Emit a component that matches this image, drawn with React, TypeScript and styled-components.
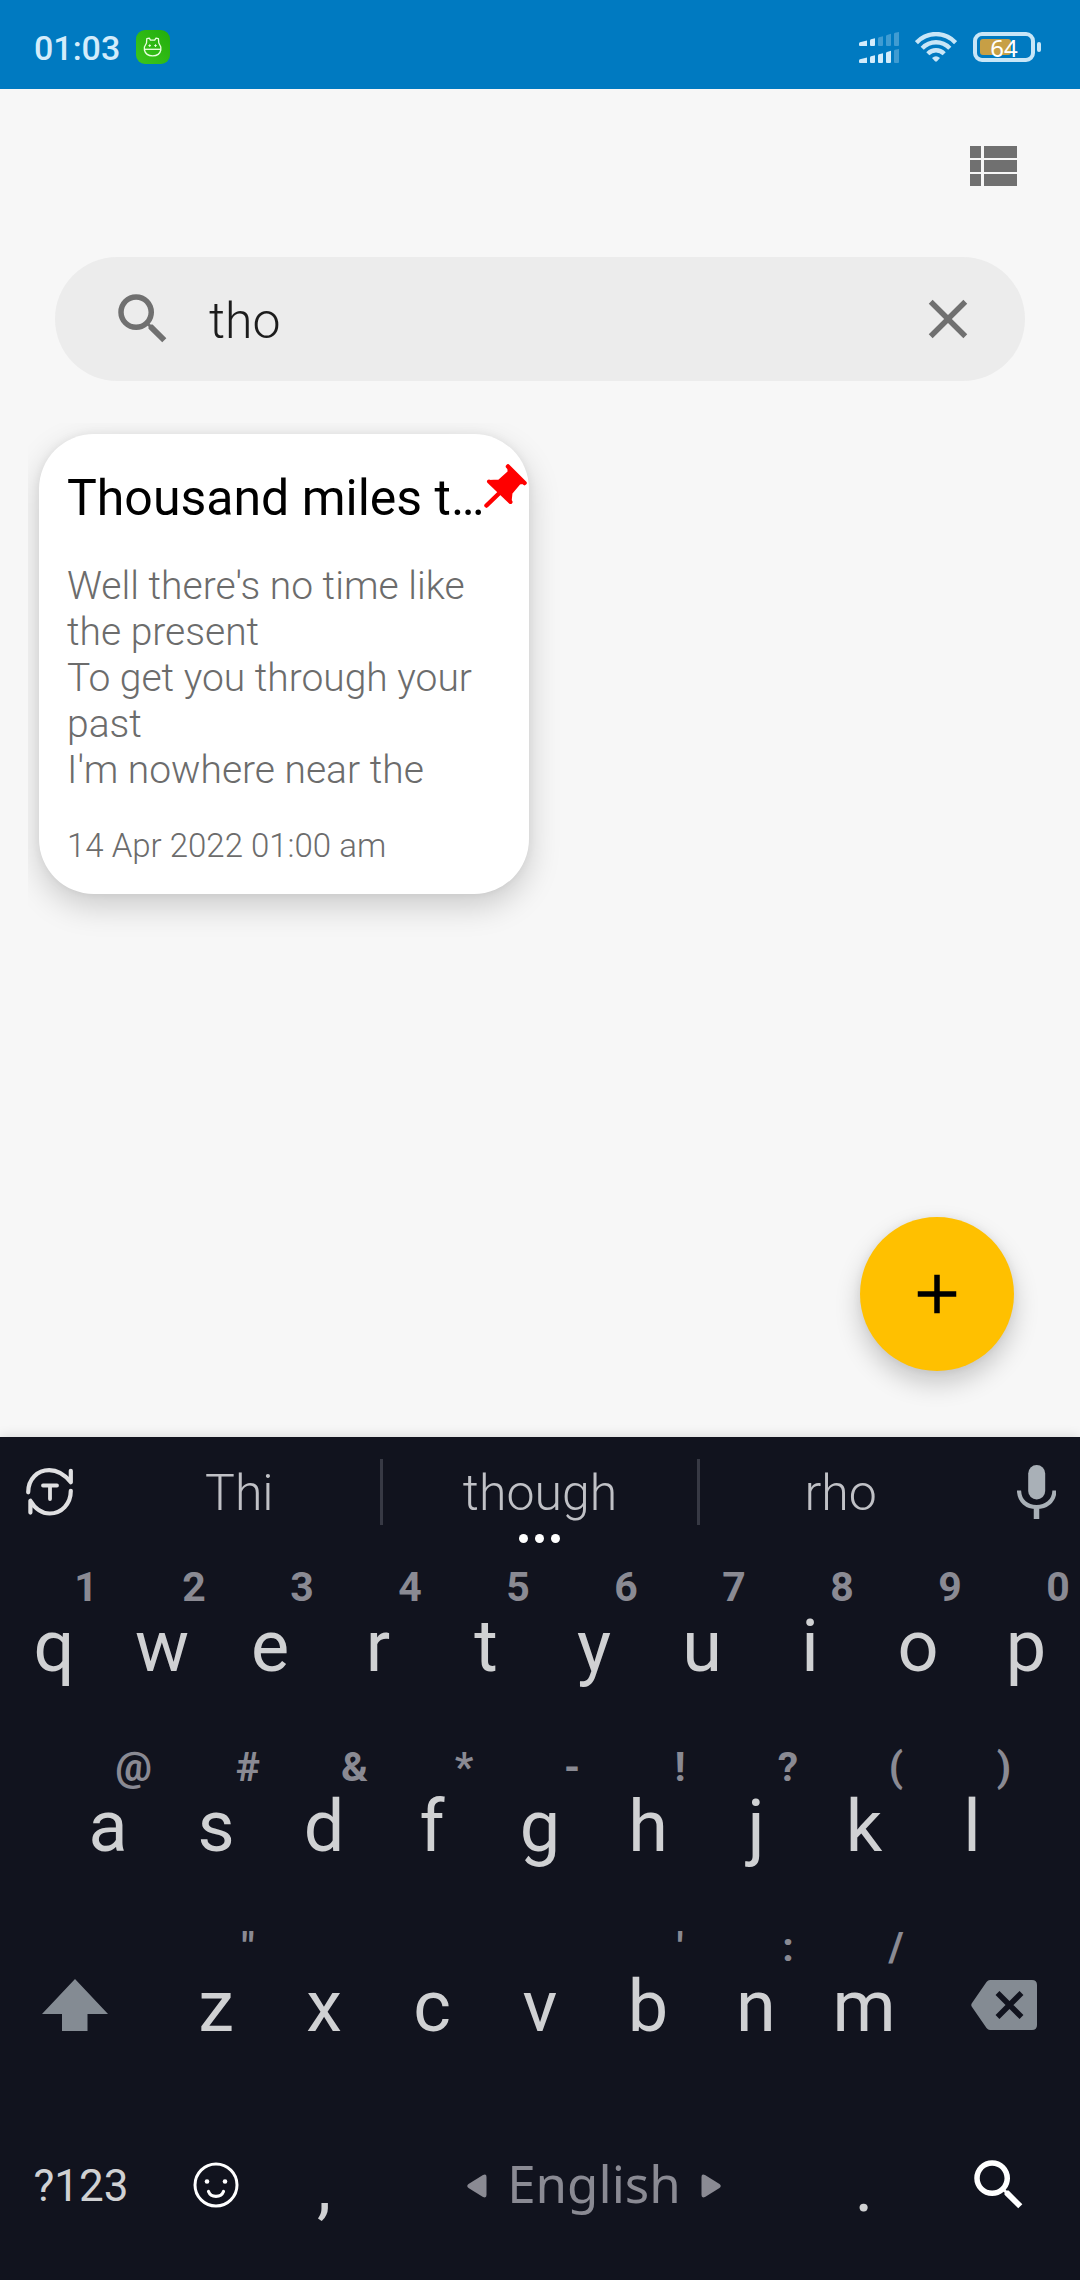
import React, { useState } from "react";
import styled, { createGlobalStyle } from "styled-components";
import { MdAdd, MdClose, MdSearch } from "react-icons/md";

const GlobalStyle = createGlobalStyle`
  *, *::before, *::after { box-sizing: border-box; }
  body { margin: 0; background: #f7f7f7; font-family: Roboto, "Noto Sans", sans-serif; }
  button, input { font: inherit; color: inherit; border: 0; padding: 0; margin: 0; background: none; }
  button { cursor: pointer; }
  svg { display: block; flex: none; }
`;

const Screen = styled.div`
  min-height: 100vh;
  display: flex;
  flex-direction: column;
`;

/* ---------- Status bar ---------- */

const StatusBar = styled.header`
  display: flex;
  align-items: center;
  gap: 16px;
  height: 89px;
  padding: 5px 39px 0 34px;
  background: #007ac1;
  color: #d3ecfb;
`;

const Clock = styled.time`
  padding-top: 2px;
  font-size: 34px;
  line-height: 40px;
  font-weight: 500;
`;

const StatusIcons = styled.div`
  display: flex;
  align-items: center;
  gap: 16px;
  margin-left: auto;
`;

const Battery = styled.div`
  display: flex;
  align-items: center;
  gap: 2px;
`;

const BatteryShell = styled.div`
  position: relative;
  width: 62px;
  height: 30px;
  padding: 3px;
  border: 4px solid #c8e6f7;
  border-radius: 9px;
`;

const BatteryCharge = styled.div`
  height: 100%;
  border-radius: 3px;
  background: #c79f45;
`;

const BatteryLabel = styled.span`
  position: absolute;
  inset: 0;
  display: grid;
  place-items: center;
  font: 24px/24px "Noto Sans", sans-serif;
  color: #fff;
`;

const BatteryCap = styled.div`
  width: 4px;
  height: 10px;
  border-radius: 2px;
  background: #c8e6f7;
`;

/* ---------- Notes page ---------- */

const Main = styled.main`
  flex: 1;
  display: flex;
  flex-direction: column;
`;

const Toolbar = styled.div`
  display: flex;
  justify-content: flex-end;
  padding: 44px 55px 58px;
`;

const IconButton = styled.button`
  flex: none;
  color: #707070;
`;

const SearchBar = styled.form`
  display: flex;
  align-items: center;
  gap: 33px;
  height: 124px;
  margin: 0 55px;
  padding: 0 44px 0 55px;
  border-radius: 62px;
  background: #ececec;
  color: #707070;
`;

const SearchInput = styled.input`
  flex: 1;
  min-width: 0;
  height: 64px;
  padding-top: 4px;
  font-size: 50px;
  font-weight: 300;
  color: #1c1c1c;
  outline: none;
`;

const NoteGrid = styled.section`
  display: grid;
  grid-template-columns: 1fr 1fr;
  margin: 42px 28px 0;
  padding-bottom: 40px;
  overflow: hidden;
`;

const NoteCard = styled.article`
  position: relative;
  margin: 11px;
  padding: 35px 28px 28px;
  border-radius: 55px;
  background: #fff;
  box-shadow: 0 12px 32px rgba(0, 0, 0, 0.18), 0 0 10px rgba(0, 0, 0, 0.06);
`;

const NoteTitle = styled.h2`
  margin: 0;
  font-size: 50px;
  line-height: 58px;
  font-weight: 400;
  color: #000;
  white-space: nowrap;
`;

const NoteBody = styled.p`
  margin: 36px 0 33px;
  font-size: 39px;
  line-height: 46px;
  font-weight: 300;
  color: #6c6c6c;
  white-space: pre-line;
`;

const NoteDate = styled.time`
  display: block;
  font-size: 33px;
  line-height: 40px;
  font-weight: 300;
  color: #6c6c6c;
`;

const PinBadge = styled.span`
  position: absolute;
  top: 30px;
  right: 2px;
`;

const AddButton = styled.button`
  display: grid;
  place-items: center;
  align-self: flex-end;
  width: 154px;
  height: 154px;
  margin: auto 66px 66px;
  border-radius: 50%;
  background: #ffc000;
  color: #000;
  box-shadow: 0 12px 26px rgba(0, 0, 0, 0.2), 0 0 8px rgba(0, 0, 0, 0.06);
`;

/* ---------- Keyboard ---------- */

const Keyboard = styled.section`
  background: #11131e;
  color: #d0d1d3;
  box-shadow: 0 0 12px rgba(0, 0, 0, 0.14);
`;

const SuggestionStrip = styled.div`
  display: grid;
  grid-template-columns: 99px 7fr 8fr 7fr 99px;
  align-items: center;
  height: 123px;
  padding-bottom: 13px;
`;

const StripButton = styled.button<{ $shift?: number }>`
  display: grid;
  place-items: center;
  padding-left: ${(p) => p.$shift ?? 0}px;
`;

const Suggestion = styled.button<{ $divided?: boolean }>`
  position: relative;
  height: 66px;
  padding-top: 2px;
  border: solid #373944;
  border-width: ${(p) => (p.$divided ? "0 3px" : "0")};
  font-size: 50px;
  line-height: 64px;
  font-weight: 300;
  color: #c0c1c6;
`;

const MoreDots = styled.span`
  position: absolute;
  left: 0;
  right: 0;
  top: 75px;
  display: flex;
  justify-content: center;
  gap: 7px;
`;

const Dot = styled.i`
  width: 9px;
  height: 9px;
  border-radius: 50%;
  background: #fff;
`;

const KeyRow = styled.div<{ $columns: string; $inset?: boolean }>`
  display: grid;
  grid-template-columns: ${(p) => p.$columns};
  height: 180px;
  padding: ${(p) => (p.$inset ? "0 5%" : "0")};
`;

const LetterKey = styled.button`
  display: flex;
  flex-direction: column;
  align-items: center;
`;

const Hint = styled.span`
  align-self: flex-end;
  min-width: 24px;
  height: 54px;
  margin-right: 10px;
  font-size: 41px;
  line-height: 54px;
  font-weight: 700;
  text-align: center;
  color: #8a8a93;
`;

const Letter = styled.span`
  font-size: 72px;
  line-height: 66px;
`;

const ActionKey = styled.button<{ $size?: number; $padding?: string }>`
  display: flex;
  align-items: center;
  justify-content: center;
  gap: 20px;
  padding: ${(p) => p.$padding ?? "0 0 8px"};
  font-size: ${(p) => p.$size ?? 44}px;
`;

const Language = styled.span`
  padding-bottom: 6px;
  font-family: "Noto Sans", sans-serif;
  font-size: 51px;
  line-height: 64px;
  font-weight: 400;
`;

const SpaceKey = styled(ActionKey)`
  color: #8a8a93;
`;

/* ---------- Drawings ---------- */

const ListIcon = () => (
  <svg width="66" height="66" viewBox="0 0 66 66" fill="currentColor" aria-hidden="true">
    <path d="M11 13H22V25H11ZM25 13H58V25H25ZM11 27H22V39H11ZM25 27H58V39H25ZM11 41H22V53H11ZM25 41H58V53H25Z" />
  </svg>
);

const AppBadge = () => (
  <svg width="34" height="34" viewBox="0 0 34 34" aria-hidden="true">
    <defs>
      <linearGradient id="badge" x1="0" y1="1" x2="1" y2="0">
        <stop offset="0" stopColor="#3cc61c" />
        <stop offset="1" stopColor="#22ad0d" />
      </linearGradient>
    </defs>
    <rect width="34" height="34" rx="9" fill="url(#badge)" />
    <g fill="none" stroke="#e9ffe0" strokeWidth="1.3" strokeLinejoin="round">
      <path d="M10.5 13 10.8 8.6 13.3 8.2 14.5 10.2H18.7L20 8.2 22.4 8.6 22.8 13 24.8 17V20C24 24 20.8 25.8 16.7 25.8S9.3 24 8.4 20V17Z" />
      <path d="M8.4 19.3H24.8" />
      <path d="M12.4 15.6H15M13.7 14.3V16.9M18.2 15.6H20.8M19.5 14.3V16.9" strokeWidth="1" />
    </g>
  </svg>
);

const signalBars = [
  "M0 11.5Q0 10.6 1 10.3L8 8.6V14H1Q0 14 0 13Z",
  "M11 8.5Q11 7.6 12 7.3L16 6.2V13Q16 14 15 14H12Q11 14 11 13Z",
  "M19 6.5Q19 5.6 20 5.3L24 4.2V13Q24 14 23 14H20Q19 14 19 13Z",
  "M27 4.2Q27 3.3 28 3L32 1.8V13Q32 14 31 14H28Q27 14 27 13Z",
  "M35 2Q35 1.1 36 .8L40 0V13Q40 14 39 14H36Q35 14 35 13Z",
];

const SignalIcon = () => (
  <svg width="40" height="31" viewBox="0 0 40 31" fill="#d3ecfb" aria-hidden="true">
    {[2, 4].map((level, row) => (
      <g key={level} transform={`translate(0 ${row * 17})`}>
        {signalBars.map((d, i) => (
          <path key={d} d={d} opacity={i < level ? 1 : 0.3} />
        ))}
      </g>
    ))}
  </svg>
);

const WifiIcon = () => (
  <svg width="42" height="30" viewBox="0 0 42 30" aria-hidden="true">
    <g fill="none" stroke="#c8e6f7" strokeWidth="4.4">
      <path d="M1.4 10.6C12.5-.8 29.5-.8 40.6 10.6" />
      <path d="M7.2 16.2C15 8.2 27 8.2 34.8 16.2" />
      <path d="M12.8 21.7C17.6 17 24.4 17 29.2 21.7" />
    </g>
    <path d="M17 26Q21 22.5 25 26L22 29.3Q21 30.2 20 29.3Z" fill="#c8e6f7" />
  </svg>
);

const PinIcon = () => (
  <svg width="43" height="44" viewBox="0 0 43 44" fill="#f00" stroke="#f00" strokeLinecap="round" strokeLinejoin="round" aria-hidden="true">
    <path d="M24 2.5 40.5 19" strokeWidth="4.5" />
    <path d="M24.5 4.5V8L15 16.5 5 17 26.5 38.5 27.5 29 35.5 19.5 39 19Z" strokeWidth="2" />
    <path d="M5 17.5 26.5 38" strokeWidth="4" />
    <path d="M2.5 41.5 17 27.5" strokeWidth="4.5" />
  </svg>
);

const TextRefreshIcon = () => (
  <svg width="47" height="48" viewBox="0 0 47 48" fill="none" stroke="#e0e0e2" strokeWidth="4.2" strokeLinecap="round" strokeLinejoin="round" aria-hidden="true">
    <path d="M2.2 24.3C2.2 11 11.5 2.2 23.2 2.2 32 2.2 38.5 6.5 44.8 14.2V2.8" />
    <path d="M44.8 22.8C44.8 36 35.5 45.5 23.7 45.5 15.5 45.5 9.5 41.5 4.4 32.8V44.6" />
    <path d="M17 17.5H31M24 17.5V31" strokeWidth="3.8" />
  </svg>
);

const MicIcon = () => (
  <svg width="39" height="54" viewBox="0 0 39 54" aria-hidden="true">
    <rect x="11.2" y="0" width="17" height="34.5" rx="8.5" fill="#a9b0b7" />
    <path d="M2 25.5C2.5 36.5 10 42 19.5 42S37 36.5 37.5 25.5" fill="none" stroke="#a9b0b7" strokeWidth="4.2" />
    <path d="M19.5 42V54" stroke="#a9b0b7" strokeWidth="5.5" />
  </svg>
);

const ShiftIcon = () => (
  <svg width="66" height="52" viewBox="0 0 66 52" fill="#848b93" aria-hidden="true">
    <path d="M33 0 66 35H45.5V52H20V35H0Z" />
  </svg>
);

const BackspaceIcon = () => (
  <svg width="66" height="50" viewBox="0 0 66 50" aria-hidden="true">
    <path d="M19 0H61Q66 0 66 5V45Q66 50 61 50H19Q17 50 15.5 48L1 27Q-.5 25 1 23L15.5 2Q17 0 19 0Z" fill="#848b93" />
    <path d="M26.5 13 50.5 37M50.5 13 26.5 37" stroke="#11131e" strokeWidth="5.5" />
  </svg>
);

const SmileIcon = () => (
  <svg width="46" height="46" viewBox="0 0 46 46" fill="none" stroke="#fff" strokeLinecap="round" aria-hidden="true">
    <circle cx="23" cy="23" r="21" strokeWidth="3" />
    <path d="M15.5 29.5C18 36 28 36 30.5 29.5" strokeWidth="3.2" />
    <circle cx="14" cy="19.5" r="2.3" fill="#fff" stroke="none" />
    <circle cx="32" cy="19.5" r="2.3" fill="#fff" stroke="none" />
  </svg>
);

const ArrowIcon = ({ flipped }: { flipped?: boolean }) => (
  <svg width="20" height="24" viewBox="0 0 20 24" fill="currentColor" aria-hidden="true">
    <path d="M1.5 10 16 1Q19.5-.5 19.5 3V21Q19.5 24.5 16 23L1.5 14Q-1 12 1.5 10Z" transform={flipped ? "matrix(-1 0 0 1 20 0)" : undefined} />
  </svg>
);

/* ---------- Data ---------- */

type KeySpec = [letter: string, hint?: string];

const topKeys: KeySpec[] = [
  ["q", "1"], ["w", "2"], ["e", "3"], ["r", "4"], ["t", "5"],
  ["y", "6"], ["u", "7"], ["i", "8"], ["o", "9"], ["p", "0"],
];
const homeKeys: KeySpec[] = [
  ["a", "@"], ["s", "#"], ["d", "&"], ["f", "*"], ["g", "-"],
  ["h", "!"], ["j", "?"], ["k", "("], ["l", ")"],
];
const lowerKeys: KeySpec[] = [
  ["z", '"'], ["x"], ["c"], ["v"], ["b", "'"], ["n", ":"], ["m", "/"],
];

const lyrics = "Well there's no time like the present\nTo get you through your past\nI'm nowhere near the";

const Keys = ({ keys }: { keys: KeySpec[] }) => (
  <>
    {keys.map(([letter, hint]) => (
      <LetterKey key={letter} type="button">
        <Hint>{hint}</Hint>
        <Letter>{letter}</Letter>
      </LetterKey>
    ))}
  </>
);

export default function App() {
  const [query, setQuery] = useState("tho");
  const charge = 64;

  return (
    <Screen>
      <GlobalStyle />
      <StatusBar>
        <Clock>01:03</Clock>
        <AppBadge />
        <StatusIcons>
          <SignalIcon />
          <WifiIcon />
          <Battery>
            <BatteryShell>
              <BatteryCharge style={{ width: `${charge}%` }} />
              <BatteryLabel>{charge}</BatteryLabel>
            </BatteryShell>
            <BatteryCap />
          </Battery>
        </StatusIcons>
      </StatusBar>

      <Main>
        <Toolbar>
          <IconButton type="button" aria-label="List view">
            <ListIcon />
          </IconButton>
        </Toolbar>

        <SearchBar role="search" onSubmit={(e) => e.preventDefault()}>
          <MdSearch size={66} />
          <SearchInput
            type="text"
            aria-label="Search notes"
            value={query}
            onChange={(e) => setQuery(e.target.value)}
          />
          <IconButton type="button" aria-label="Clear search" onClick={() => setQuery("")}>
            <MdClose size={66} />
          </IconButton>
        </SearchBar>

        <NoteGrid>
          <NoteCard>
            <NoteTitle>Thousand miles t…</NoteTitle>
            <NoteBody>{lyrics}</NoteBody>
            <NoteDate>14 Apr 2022 01:00 am</NoteDate>
            <PinBadge>
              <PinIcon />
            </PinBadge>
          </NoteCard>
        </NoteGrid>

        <AddButton type="button" aria-label="Add note">
          <MdAdd size={66} />
        </AddButton>
      </Main>

      <Keyboard aria-label="Keyboard">
        <SuggestionStrip>
          <StripButton type="button" aria-label="Text tools">
            <TextRefreshIcon />
          </StripButton>
          <Suggestion type="button">Thi</Suggestion>
          <Suggestion type="button" $divided>
            though
            <MoreDots>
              <Dot />
              <Dot />
              <Dot />
            </MoreDots>
          </Suggestion>
          <Suggestion type="button">rho</Suggestion>
          <StripButton type="button" aria-label="Voice input" $shift={12}>
            <MicIcon />
          </StripButton>
        </SuggestionStrip>

        <KeyRow $columns="repeat(10, 1fr)">
          <Keys keys={topKeys} />
        </KeyRow>
        <KeyRow $columns="repeat(9, 1fr)" $inset>
          <Keys keys={homeKeys} />
        </KeyRow>
        <KeyRow $columns="3fr repeat(7, 2fr) 3fr">
          <ActionKey type="button" aria-label="Shift" $padding="0 12px 10px 0">
            <ShiftIcon />
          </ActionKey>
          <Keys keys={lowerKeys} />
          <ActionKey type="button" aria-label="Backspace" $padding="0 0 10px 10px">
            <BackspaceIcon />
          </ActionKey>
        </KeyRow>
        <KeyRow $columns="3fr 2fr 2fr 8fr 2fr 3fr">
          <ActionKey type="button">?123</ActionKey>
          <ActionKey type="button" aria-label="Emoji" $padding="0 0 10px">
            <SmileIcon />
          </ActionKey>
          <ActionKey type="button" $size={72}>,</ActionKey>
          <SpaceKey type="button">
            <ArrowIcon />
            <Language>English</Language>
            <ArrowIcon flipped />
          </SpaceKey>
          <ActionKey type="button" $size={72}>.</ActionKey>
          <ActionKey type="button" aria-label="Search" $padding="0 0 10px">
            <MdSearch size={66} color="#fff" />
          </ActionKey>
        </KeyRow>
      </Keyboard>
    </Screen>
  );
}
